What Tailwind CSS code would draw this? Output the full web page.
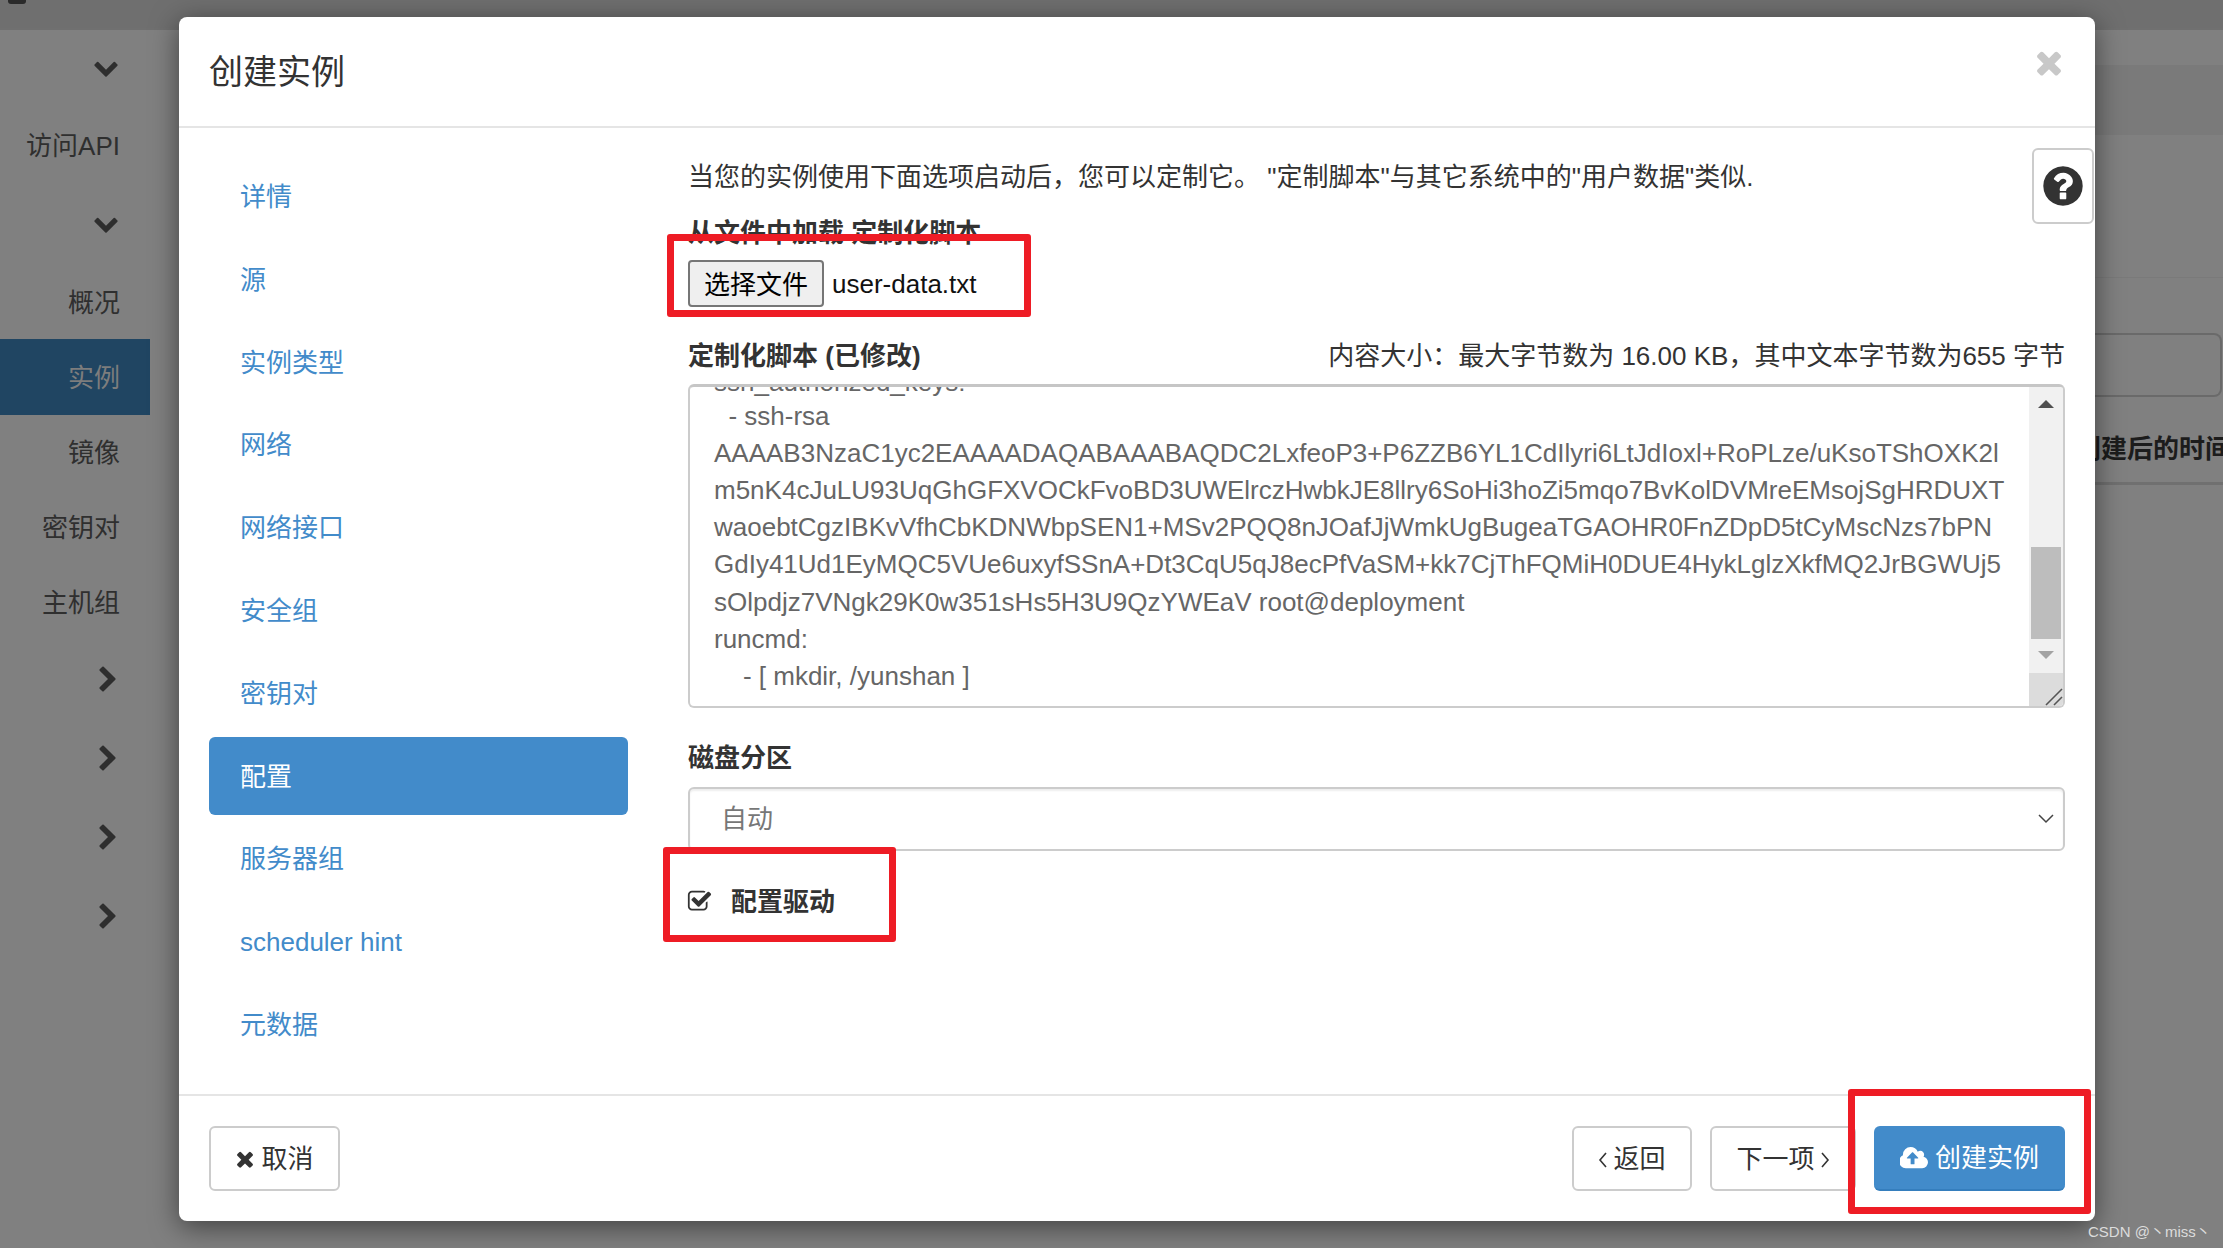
<!DOCTYPE html>
<html lang="zh-CN">
<head>
    <meta charset="UTF-8">
    <title>创建实例</title>
    <script src="https://cdn.jsdelivr.net/npm/@tailwindcss/browser@4"></script>
</head>
<body class="h-screen overflow-hidden bg-[#808080] font-['Liberation_Sans','Noto_Sans_CJK_SC',sans-serif] text-[26px] text-[#333]">
    <div class="relative w-[2223px] h-[1248px] overflow-hidden">

        <!-- Dimmed page behind the dialog -->
        <div class="h-[30px] bg-[#6f6f6f] border-b-2 border-[#707070]"></div>
        <div class="flex">
            <aside class="w-[150px] shrink-0 text-[#2f2f2f] text-right leading-[38px]">
                <div class="h-[78px] pt-[24px] flex justify-end pr-[31px]">
                    <svg class="w-[26px] h-[26px]" viewBox="0 0 1792 1792" fill="#2e2e2e"><path d="M1683 808l-742 741q-19 19-45 19t-45-19l-742-741q-19-19-19-45.5t19-45.5l166-166q19-19 45-19t45 19l531 531 531-531q19-19 45-19t45 19l166 166q19 19 19 45.5t-19 45.5z"/></svg>
                </div>
                <div class="h-[78px] pr-[30px] pt-[19px]">访问API</div>
                <div class="h-[76px] pt-[24px] flex justify-end pr-[31px]">
                    <svg class="w-[26px] h-[26px]" viewBox="0 0 1792 1792" fill="#2e2e2e"><path d="M1683 808l-742 741q-19 19-45 19t-45-19l-742-741q-19-19-19-45.5t19-45.5l166-166q19-19 45-19t45 19l531 531 531-531q19-19 45-19t45 19l166 166q19 19 19 45.5t-19 45.5z"/></svg>
                </div>
                <div class="h-[77px] pr-[30px] pt-[22px]">概况</div>
                <div class="h-[76px] pr-[30px] pt-[20px] bg-[#204562] text-[#7d7d7d]">实例</div>
                <div class="h-[75px] pr-[30px] pt-[19px]">镜像</div>
                <div class="h-[75px] pr-[30px] pt-[19px]">密钥对</div>
                <div class="h-[75px] pr-[30px] pt-[19px]">主机组</div>
                <div class="h-[79px] pt-[26px] flex justify-end pr-[28px]">
                    <svg class="w-[28px] h-[28px]" viewBox="0 0 1792 1792" fill="#2e2e2e"><path d="M1363 877l-742 742q-19 19-45 19t-45-19l-166-166q-19-19-19-45t19-45l531-531-531-531q-19-19-19-45t19-45l166-166q19-19 45-19t45 19l742 742q19 19 19 45t-19 45z"/></svg>
                </div>
                <div class="h-[79px] pt-[26px] flex justify-end pr-[28px]">
                    <svg class="w-[28px] h-[28px]" viewBox="0 0 1792 1792" fill="#2e2e2e"><path d="M1363 877l-742 742q-19 19-45 19t-45-19l-166-166q-19-19-19-45t19-45l531-531-531-531q-19-19-19-45t19-45l166-166q19-19 45-19t45 19l742 742q19 19 19 45t-19 45z"/></svg>
                </div>
                <div class="h-[79px] pt-[26px] flex justify-end pr-[28px]">
                    <svg class="w-[28px] h-[28px]" viewBox="0 0 1792 1792" fill="#2e2e2e"><path d="M1363 877l-742 742q-19 19-45 19t-45-19l-166-166q-19-19-19-45t19-45l531-531-531-531q-19-19-19-45t19-45l166-166q19-19 45-19t45 19l742 742q19 19 19 45t-19 45z"/></svg>
                </div>
                <div class="h-[79px] pt-[26px] flex justify-end pr-[28px]">
                    <svg class="w-[28px] h-[28px]" viewBox="0 0 1792 1792" fill="#2e2e2e"><path d="M1363 877l-742 742q-19 19-45 19t-45-19l-166-166q-19-19-19-45t19-45l531-531-531-531q-19-19-19-45t19-45l166-166q19-19 45-19t45 19l742 742q19 19 19 45t-19 45z"/></svg>
                </div>
            </aside>
        </div>

        <!-- Page content peeking out right of the dialog -->
        <div class="absolute left-[2075px] top-[30px] w-[148px] h-[455px] border-b-[3px] border-[#707070] overflow-hidden">
            <div class="h-[35px]"></div>
            <div class="h-[70px] bg-[#7a7a7a]"></div>
            <div class="h-[142px]"></div>
            <div class="h-[56px] border-t border-[#7a7a7a]"></div>
            <div class="h-[64px] rounded-r-[8px] border-2 border-l-0 border-[#6a6a6a] mr-[1px]"></div>
            <div class="h-[33px]"></div>
            <div class="font-bold whitespace-nowrap text-[#1c1c1c] leading-[38px]">创建后的时间</div>
        </div>
        <div class="absolute left-[8px] top-0 w-[18px] h-[4px] rounded-b-[3px] bg-[#2a2a2a]"></div>

        <!-- Dialog -->
        <div class="absolute left-[179px] top-[17px] w-[1916px] h-[1204px] bg-white rounded-[8px] flex flex-col shadow-[0_6px_28px_rgba(0,0,0,0.5)]">
            <div class="h-[111px] shrink-0 border-b-2 border-[#e5e5e5] pl-[30px] pt-[32px] text-[34px] leading-[46px] relative">
                创建实例
                <svg class="absolute left-[1852px] top-[29px] w-[36px] h-[36px]" viewBox="0 0 1408 1792" fill="#c8c8c8"><path d="M1298 1242q0 40-28 68l-136 136q-28 28-68 28t-68-28l-294-294-294 294q-28 28-68 28t-68-28l-136-136q-28-28-28-68t28-68l294-294-294-294q-28-28-28-68t28-68l136-136q28-28 68-28t68 28l294 294 294-294q28-28 68-28t68 28l136 136q28 28 28 68t-28 68l-294 294 294 294q28 28 28 68z"/></svg>
            </div>

            <div class="flex flex-1 min-h-0 relative">
                <!-- Wizard steps -->
                <nav class="w-[509px] shrink-0 pl-[30px] pr-[60px] pt-[29px] flex flex-col gap-[4.8px] text-[#428bca]">
                    <a class="h-[78px] flex items-center pl-[31px] pt-[3px] rounded-[6px]">详情</a>
                    <a class="h-[78px] flex items-center pl-[31px] pt-[3px] rounded-[6px]">源</a>
                    <a class="h-[78px] flex items-center pl-[31px] pt-[3px] rounded-[6px]">实例类型</a>
                    <a class="h-[78px] flex items-center pl-[31px] pt-[3px] rounded-[6px]">网络</a>
                    <a class="h-[78px] flex items-center pl-[31px] pt-[3px] rounded-[6px]">网络接口</a>
                    <a class="h-[78px] flex items-center pl-[31px] pt-[3px] rounded-[6px]">安全组</a>
                    <a class="h-[78px] flex items-center pl-[31px] pt-[3px] rounded-[6px]">密钥对</a>
                    <a class="h-[78px] flex items-center pl-[31px] pt-[3px] rounded-[6px] bg-[#428bca] text-white">配置</a>
                    <a class="h-[78px] flex items-center pl-[31px] pt-[3px] rounded-[6px]">服务器组</a>
                    <a class="h-[78px] flex items-center pl-[31px] pt-[2px] rounded-[6px]">scheduler hint</a>
                    <a class="h-[78px] flex items-center pl-[31px] pt-[3px] rounded-[6px]">元数据</a>
                </nav>

                <!-- Configuration form -->
                <div class="flex-1 pr-[30px] pt-[30px] leading-[38px]">
                    <p class="h-[38px] whitespace-nowrap">当您的实例使用下面选项启动后，您可以定制它。 "定制脚本"与其它系统中的"用户数据"类似.</p>
                    <div class="mt-[18px] h-[38px] font-bold">从文件中加载 定制化脚本</div>
                    <div class="mt-[8px] flex items-center h-[47px]">
                        <button class="h-[47px] w-[136px] pt-[3px] bg-[#efefef] border-2 border-[#767676] rounded-[4px] text-black">选择文件</button>
                        <span class="ml-[8px] pt-[1px] text-[#111]">user-data.txt</span>
                    </div>
                    <div class="mt-[30px] h-[38px] flex justify-between">
                        <span class="font-bold">定制化脚本 (已修改)</span>
                        <span>内容大小：最大字节数为 16.00 KB，其中文本字节数为655 字节</span>
                    </div>
                    <div class="mt-[9px] h-[324px] flex overflow-hidden rounded-[6px] border-2 border-[#ccc] border-t-[3px] border-t-[#c6c6c6]">
                        <div class="flex-1 overflow-hidden pl-[24px] -mt-[26px] leading-[37.1px] whitespace-pre text-[#666]"><span class="block mt-[3px] -mb-[3px]">ssh_authorized_keys:</span><span class="block">  - ssh-rsa</span><span class="block">AAAAB3NzaC1yc2EAAAADAQABAAABAQDC2LxfeoP3+P6ZZB6YL1CdIlyri6LtJdIoxl+RoPLze/uKsoTShOXK2l</span><span class="block">m5nK4cJuLU93UqGhGFXVOCkFvoBD3UWElrczHwbkJE8llry6SoHi3hoZi5mqo7BvKolDVMreEMsojSgHRDUXT</span><span class="block">waoebtCgzIBKvVfhCbKDNWbpSEN1+MSv2PQQ8nJOafJjWmkUgBugeaTGAOHR0FnZDpD5tCyMscNzs7bPN</span><span class="block">GdIy41Ud1EyMQC5VUe6uxyfSSnA+Dt3CqU5qJ8ecPfVaSM+kk7CjThFQMiH0DUE4HykLglzXkfMQ2JrBGWUj5</span><span class="block">sOlpdjz7VNgk29K0w351sHs5H3U9QzYWEaV root@deployment</span><span class="block">runcmd:</span><span class="block">    - [ mkdir, /yunshan ]</span></div>
                        <!-- scrollbar and resize corner -->
                        <div class="w-[34px] shrink-0 flex flex-col bg-[#f1f1f1]">
                            <div class="h-[160px] pt-[13px] flex justify-center">
                                <svg class="w-[16px] h-[8px]" viewBox="0 0 16 8" fill="#505050"><path d="M8 0l8 8H0z"/></svg>
                            </div>
                            <div class="h-[92px] ml-[2px] mr-[2px] bg-[#bdbdbd]"></div>
                            <div class="h-[34px] pt-[12px] flex justify-center">
                                <svg class="w-[16px] h-[8px]" viewBox="0 0 16 8" fill="#a3a3a3"><path d="M0 0h16L8 8z"/></svg>
                            </div>
                            <div class="flex-1 bg-[#dcdcdc] flex items-end justify-end">
                                <svg class="w-[18px] h-[18px]" viewBox="0 0 18 18" stroke="#555" stroke-width="1.6" fill="none"><path d="M1 17L17 1M9 17l8-8"/></svg>
                            </div>
                        </div>
                    </div>
                    <div class="mt-[31px] h-[38px] font-bold">磁盘分区</div>
                    <div class="mt-[10px] h-[64px] rounded-[6px] border-2 border-[#ccc] flex items-center justify-between pl-[31px] pr-[9px] text-[#777] shadow-[inset_0_2px_2px_rgba(0,0,0,0.07)]">
                        <span>自动</span>
                        <svg class="w-[16px] h-[10px]" viewBox="0 0 16 10" fill="none" stroke="#444" stroke-width="1.5"><path d="M1 1l7 7 7-7"/></svg>
                    </div>
                    <div class="mt-[32px] h-[38px] flex items-center font-bold">
                        <svg class="w-[25px] h-[25px] -ml-[1px] -mt-[2px]" viewBox="0 0 1792 1792" fill="#333"><path d="M1472 930v318q0 119-84.5 203.5t-203.5 84.5h-832q-119 0-203.5-84.5t-84.5-203.5v-832q0-119 84.5-203.5t203.5-84.5h832q63 0 117 25 15 7 18 23 3 17-9 29l-49 49q-10 10-23 10-3 0-9-2-23-6-45-6h-832q-66 0-113 47t-47 113v832q0 66 47 113t113 47h832q66 0 113-47t47-113v-254q0-13 9-22l64-64q10-10 23-10 6 0 12 3 20 8 20 29zm231-489l-814 814q-24 24-57 24t-57-24l-430-430q-24-24-24-57t24-57l110-110q24-24 57-24t57 24l263 263 647-647q24-24 57-24t57 24l110 110q24 24 24 57t-24 57z"/></svg>
                        <span class="ml-[19px]">配置驱动</span>
                    </div>
                </div>

                <!-- Help toggle -->
                <div class="absolute right-[1px] top-[20px] w-[62px] h-[76px] border-2 border-[#ccc] rounded-[6px] bg-white flex items-center justify-center">
                    <svg class="w-[46px] h-[46px]" viewBox="0 0 1792 1792" fill="#333"><path d="M1024 1376v-192q0-14-9-23t-23-9h-192q-14 0-23 9t-9 23v192q0 14 9 23t23 9h192q14 0 23-9t9-23zm256-672q0-88-55.5-163t-138.5-116-170-41q-243 0-371 213-15 24 8 42l132 100q7 6 19 6 16 0 25-12 53-68 86-92 34-24 86-24 48 0 85.5 26t37.5 59q0 38-20 61t-68 45q-63 28-115.5 86.5t-52.5 125.5v36q0 14 9 23t23 9h192q14 0 23-9t9-23q0-19 21.5-49.5t54.5-49.5q32-18 49-28.5t46-35 44.5-48 28-60.5 12.5-81zm384 192q0 209-103 385.5t-279.5 279.5-385.5 103-385.5-103-279.5-279.5-103-385.5 103-385.5 279.5-279.5 385.5-103 385.5 103 279.5 279.5 103 385.5z"/></svg>
                </div>
            </div>

            <!-- Footer actions -->
            <div class="h-[127px] shrink-0 border-t-2 border-[#e5e5e5] pl-[30px] pr-[30px] pt-[30px] flex items-start">
                <button class="h-[65px] w-[131px] pt-[2px] border-2 border-[#ccc] rounded-[6px] flex items-center justify-center gap-[6px]">
                    <svg class="w-[20px] h-[24px]" viewBox="0 0 1408 1792" fill="#333"><path d="M1298 1242q0 40-28 68l-136 136q-28 28-68 28t-68-28l-294-294-294 294q-28 28-68 28t-68-28l-136-136q-28-28-28-68t28-68l294-294-294-294q-28-28-28-68t28-68l136-136q28-28 68-28t68 28l294 294 294-294q28-28 68-28t68 28l136 136q28 28 28 68t-28 68l-294 294 294 294q28 28 28 68z"/></svg>
                    取消
                </button>
                <button class="ml-auto h-[65px] w-[120px] pt-[2px] border-2 border-[#ccc] rounded-[6px] flex items-center justify-center gap-[6px]">
                    <svg class="w-[9px] h-[18px]" viewBox="0 0 9 18" fill="none" stroke="#333" stroke-width="1.6"><path d="M8 2L2 9l6 7"/></svg>
                    返回
                </button>
                <button class="ml-[18px] h-[65px] w-[146px] pt-[2px] border-2 border-[#ccc] rounded-[6px] flex items-center justify-center gap-[6px]">
                    下一项
                    <svg class="w-[9px] h-[18px]" viewBox="0 0 9 18" fill="none" stroke="#333" stroke-width="1.6"><path d="M1 2l6 7-6 7"/></svg>
                </button>
                <button class="ml-[18px] h-[65px] w-[191px] pt-[2px] rounded-[6px] bg-[#428bca] border-b-2 border-[#357ebd] text-white flex items-center justify-center gap-[6px]">
                    <svg class="w-[29px] h-[27px]" viewBox="0 0 1920 1792" fill="#fff"><path d="M1216 864q0-14-9-23l-352-352q-9-9-23-9t-23 9l-351 351q-10 12-10 24 0 14 9 23t23 9h224v352q0 13 9.5 22.5t22.5 9.5h192q13 0 22.5-9.5t9.5-22.5v-352h224q13 0 22.5-9.5t9.5-22.5zm640 288q0 159-112.5 271.5t-271.5 112.5h-1088q-185 0-316.5-131.5t-131.5-316.5q0-130 70-240t188-165q-2-30-2-43 0-212 150-362t362-150q156 0 285.5 87t188.5 231q71-62 166-62 106 0 181 75t75 181q0 76-41 138 130 31 213.5 135.5t83.5 238.5z"/></svg>
                    创建实例
                </button>
            </div>
        </div>

        <!-- Red annotation boxes drawn over the screenshot -->
        <div class="absolute left-[667px] top-[234px] w-[364px] h-[83px] border-[7px] border-[#ee1c25] rounded-[3px]"></div>
        <div class="absolute left-[663px] top-[847px] w-[233px] h-[95px] border-[7px] border-[#ee1c25] rounded-[3px]"></div>
        <div class="absolute left-[1848px] top-[1089px] w-[243px] h-[125px] border-[7px] border-[#ee1c25] rounded-[3px]"></div>

        <!-- Watermark -->
        <div class="absolute left-[2088px] top-[1222px] text-[15px] leading-[20px] text-[#dcdcdc] whitespace-nowrap">CSDN @丶miss丶</div>
    </div>
</body>
</html>
